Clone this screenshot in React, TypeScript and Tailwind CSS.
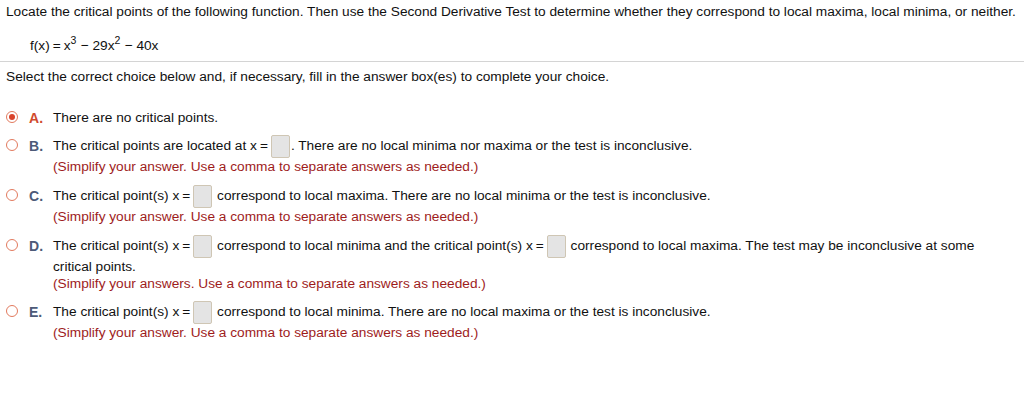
import React from 'react';

const note = '(Simplify your answer. Use a comma to separate answers as needed.)';

function Box() {
  return <span className="inline-block align-middle w-[19px] h-[23px] ml-[3px] mr-[1px] bg-[#e4e4e4] border border-[#cfc6b4] rounded-[2px]" />;
}

function Radio({ on }: { on?: boolean }) {
  return (
    <span className="w-[12px] h-[12px] rounded-full border-[1.5px] border-[#e27a5e] flex items-center justify-center bg-white">
      {on && <span className="w-[6px] h-[6px] rounded-full bg-[#d9432b]" />}
    </span>
  );
}

function Option({ letter, on, children }: { letter: string; on?: boolean; children: React.ReactNode }) {
  return (
    <div className="flex">
      <div className="w-[53px] shrink-0 flex items-start pl-[6px] pt-[5px] h-[24px]">
        <Radio on={on} />
        <span className={`ml-[11px] -mt-[3px] font-bold text-[14px] ${on ? 'text-[#d04a2e]' : 'text-[#4d5a78]'}`}>{letter}.</span>
      </div>
      <div className="flex-1 pr-2">{children}</div>
    </div>
  );
}

function Line({ children, tall }: { children: React.ReactNode; tall?: boolean }) {
  return <div className={`${tall ? 'h-[24px] leading-[24px]' : 'h-[17px] leading-[17px]'} whitespace-nowrap`}>{children}</div>;
}

function Note({ text = note }: { text?: string }) {
  return <div className="h-[17px] leading-[17px] text-[#9e1c1c]">{text}</div>;
}

export default function App() {
  return (
    <div className="w-[1024px] h-[419px] bg-white text-[13.7px] text-[#111] font-['Liberation_Sans',Arial,sans-serif]">
      <div className="pt-[3px] px-[6px] leading-[17px] whitespace-nowrap">
        Locate the critical points of the following function. Then use the Second Derivative Test to determine whether they correspond to local maxima, local minima, or neither.
      </div>
      <div className="pl-[30px] pt-[17px] h-[41px] leading-[17px]">
        f(x)<span className="mx-[3px]">=</span>x<sup className="text-[10.5px] relative -top-[6px]">3</sup>
        <span className="mx-[4px]">−</span>29x<sup className="text-[10.5px] relative -top-[6px]">2</sup>
        <span className="mx-[4px]">−</span>40x
      </div>
      <div className="border-t border-[#d4d4d4]" />
      <div className="px-[6px] pt-[6px] leading-[17px]">
        Select the correct choice below and, if necessary, fill in the answer box(es) to complete your choice.
      </div>
      <div className="pt-[21px] flex flex-col">
        <div className="mb-[4px]">
          <Option letter="A" on>
            <Line tall>There are no critical points.</Line>
          </Option>
        </div>
        <div className="mb-[9px]">
          <Option letter="B">
            <Line tall>The critical points are located at x<span className="ml-[3px]">=</span><Box />. There are no local minima nor maxima or the test is inconclusive.</Line>
            <Note />
          </Option>
        </div>
        <div className="mb-[9px]">
          <Option letter="C">
            <Line tall>The critical point(s) x<span className="ml-[3px]">=</span><Box /> correspond to local maxima. There are no local minima or the test is inconclusive.</Line>
            <Note />
          </Option>
        </div>
        <div className="mb-[8px]">
          <Option letter="D">
            <Line tall>The critical point(s) x<span className="ml-[3px]">=</span><Box /> correspond to local minima and the critical point(s) x<span className="ml-[3px]">=</span><Box /> correspond to local maxima. The test may be inconclusive at some</Line>
            <Line>critical points.</Line>
            <Note text="(Simplify your answers. Use a comma to separate answers as needed.)" />
          </Option>
        </div>
        <div>
          <Option letter="E">
            <Line tall>The critical point(s) x<span className="ml-[3px]">=</span><Box /> correspond to local minima. There are no local maxima or the test is inconclusive.</Line>
            <Note />
          </Option>
        </div>
      </div>
    </div>
  );
}
